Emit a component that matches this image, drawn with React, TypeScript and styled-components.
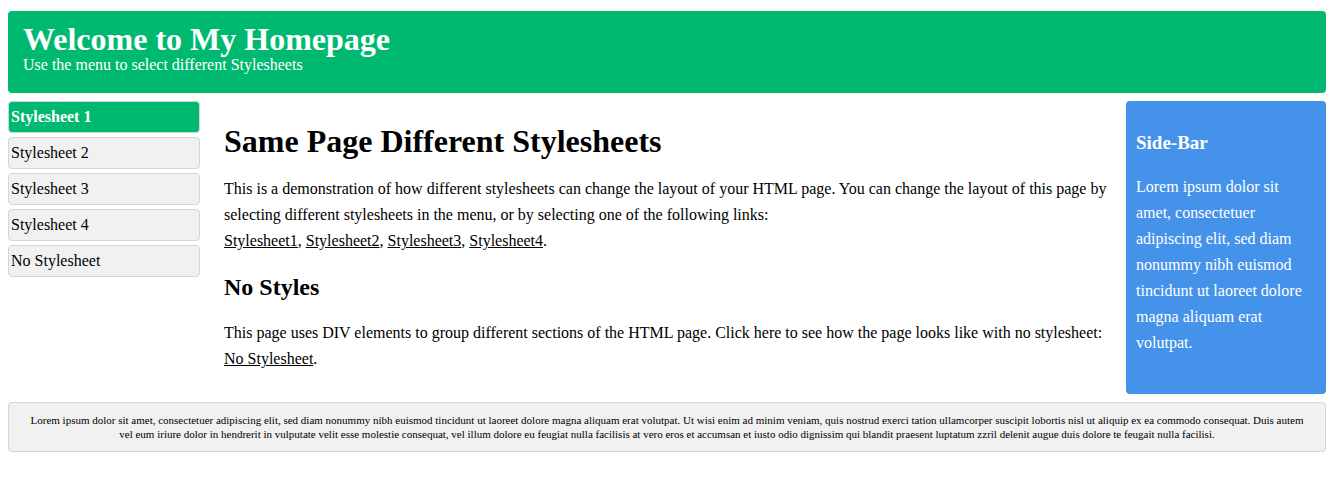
import React from "react";
import styled, { createGlobalStyle } from "styled-components";

const GlobalStyle = createGlobalStyle`
  * { box-sizing: border-box; }
  body {
    margin: 0;
    background: #ffffff;
    color: #000000;
    font-family: "Liberation Serif", "Times New Roman", serif;
    font-size: 16px;
    line-height: 26px;
  }
`;

const Page = styled.div`
  display: flex;
  flex-direction: column;
  gap: 8px;
  padding: 11px 10px 8px 8px;
`;

const Header = styled.header`
  padding: 11px 15px 19px;
  border-radius: 4px;
  background: #00b971;
  color: #ffffff;
`;

const SiteTitle = styled.h1`
  margin: 0;
  font-size: 32px;
  line-height: 34px;
`;

const Tagline = styled.p`
  margin: 0;
  line-height: 18px;
`;

const Columns = styled.div`
  display: flex;
  align-items: stretch;
`;

const Menu = styled.nav`
  flex: 0 0 192px;
`;

const MenuList = styled.ul`
  display: flex;
  flex-direction: column;
  gap: 4px;
  margin: 0;
  padding: 0;
  list-style: none;
`;

const MenuLink = styled.a<{ $active?: boolean }>`
  display: block;
  padding: 2px;
  border: 1px solid #d4d4d4;
  border-radius: 4px;
  background: ${(p) => (p.$active ? "#00b971" : "#f1f1f1")};
  color: ${(p) => (p.$active ? "#ffffff" : "#000000")};
  font-weight: ${(p) => (p.$active ? "bold" : "normal")};
  text-decoration: none;
`;

const Main = styled.main`
  flex: 1;
  min-width: 0;
  padding: 27px 16px 22px 24px;
`;

const PageHeading = styled.h1`
  margin: 0 0 22px;
  font-size: 32px;
  line-height: 26px;
`;

const SectionHeading = styled.h2`
  margin: 20px 0;
  font-size: 24px;
  line-height: 26px;
`;

const Paragraph = styled.p`
  margin: 0;
`;

const TextLink = styled.a`
  color: #000000;
  text-decoration: underline;
`;

const SideBar = styled.aside`
  flex: 0 0 200px;
  padding: 29px 10px 28px;
  border-radius: 4px;
  background: #4592eb;
  color: #ffffff;
`;

const SideHeading = styled.h3`
  margin: 0 0 18px;
  font-size: 19px;
  line-height: 26px;
`;

const Footer = styled.footer`
  padding: 10px 16px;
  border: 1px solid #d4d4d4;
  border-radius: 4px;
  background: #f1f1f1;
  font-size: 11px;
  line-height: 14px;
  text-align: center;
`;

const menuItems = ["Stylesheet 1", "Stylesheet 2", "Stylesheet 3", "Stylesheet 4", "No Stylesheet"];
const sheets = ["Stylesheet1", "Stylesheet2", "Stylesheet3", "Stylesheet4"];

export default function App() {
  return (
    <>
      <GlobalStyle />
      <Page>
        <Header>
          <SiteTitle>Welcome to My Homepage</SiteTitle>
          <Tagline>Use the menu to select different Stylesheets</Tagline>
        </Header>
        <Columns>
          <Menu aria-label="Stylesheets">
            <MenuList>
              {menuItems.map((label, i) => (
                <li key={label}>
                  <MenuLink href="#" $active={i === 0}>{label}</MenuLink>
                </li>
              ))}
            </MenuList>
          </Menu>
          <Main>
            <PageHeading>Same Page Different Stylesheets</PageHeading>
            <Paragraph>
              This is a demonstration of how different stylesheets can change the layout of your HTML page. You can
              change the layout of this page by selecting different stylesheets in the menu, or by selecting one of the
              following links:
              <br />
              {sheets.map((label, i) => (
                <React.Fragment key={label}>
                  <TextLink href="#">{label}</TextLink>
                  {i < sheets.length - 1 ? ", " : "."}
                </React.Fragment>
              ))}
            </Paragraph>
            <SectionHeading>No Styles</SectionHeading>
            <Paragraph>
              This page uses DIV elements to group different sections of the HTML page. Click here to see how the page
              looks like with no stylesheet:
              <br />
              <TextLink href="#">No Stylesheet</TextLink>.
            </Paragraph>
          </Main>
          <SideBar>
            <SideHeading>Side-Bar</SideHeading>
            <Paragraph>
              Lorem ipsum dolor sit amet, consectetuer adipiscing elit, sed diam nonummy nibh euismod tincidunt ut
              laoreet dolore magna aliquam erat volutpat.
            </Paragraph>
          </SideBar>
        </Columns>
        <Footer>
          Lorem ipsum dolor sit amet, consectetuer adipiscing elit, sed diam nonummy nibh euismod tincidunt ut laoreet
          dolore magna aliquam erat volutpat. Ut wisi enim ad minim veniam, quis nostrud exerci tation ullamcorper
          suscipit lobortis nisl ut aliquip ex ea commodo consequat. Duis autem vel eum iriure dolor in hendrerit in
          vulputate velit esse molestie consequat, vel illum dolore eu feugiat nulla facilisis at vero eros et accumsan
          et iusto odio dignissim qui blandit praesent luptatum zzril delenit augue duis dolore te feugait nulla
          facilisi.
        </Footer>
      </Page>
    </>
  );
}
